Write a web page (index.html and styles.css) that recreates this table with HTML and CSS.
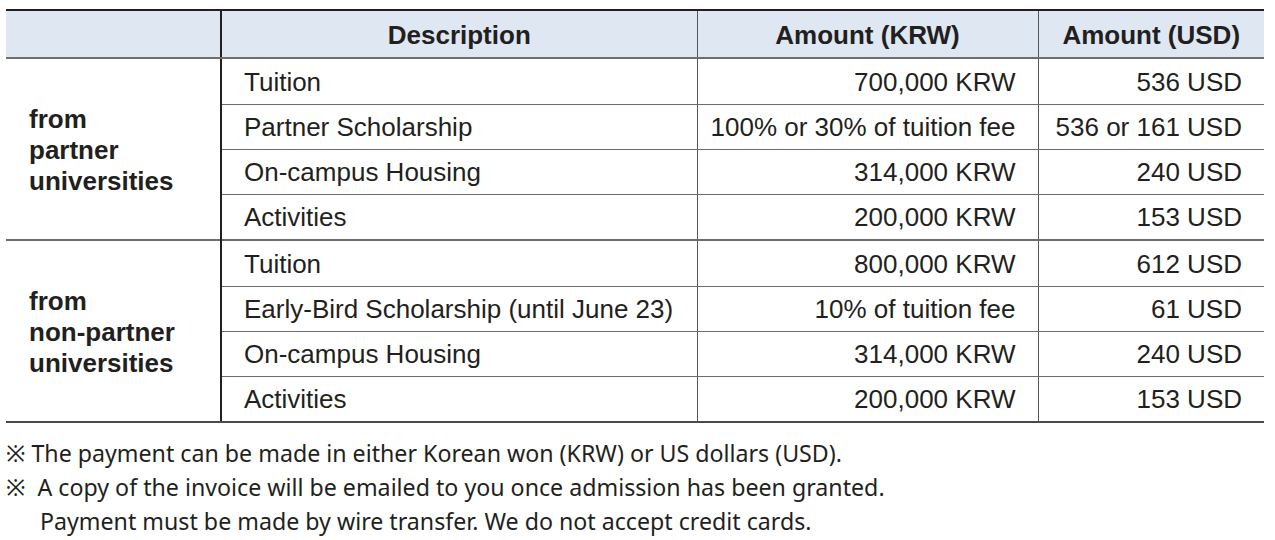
FILE: index.html
```html
<!DOCTYPE html>
<html>
<head>
<meta charset="utf-8">
<link rel="stylesheet" href="styles.css">
</head>
<body>
<div class="page">
  <table class="fees">
    <colgroup>
      <col class="c1"><col class="c2"><col class="c3"><col class="c4">
    </colgroup>
    <thead>
      <tr>
        <th class="group-h"></th>
        <th>Description</th>
        <th>Amount (KRW)</th>
        <th>Amount (USD)</th>
      </tr>
    </thead>
    <tbody class="grp">
      <tr class="first">
        <td class="label" rowspan="4">from<br>partner<br>universities</td>
        <td class="desc">Tuition</td>
        <td class="num">700,000 KRW</td>
        <td class="num">536 USD</td>
      </tr>
      <tr>
        <td class="desc">Partner Scholarship</td>
        <td class="num">100% or 30% of tuition fee</td>
        <td class="num">536 or 161 USD</td>
      </tr>
      <tr>
        <td class="desc">On-campus Housing</td>
        <td class="num">314,000 KRW</td>
        <td class="num">240 USD</td>
      </tr>
      <tr>
        <td class="desc">Activities</td>
        <td class="num">200,000 KRW</td>
        <td class="num">153 USD</td>
      </tr>
    </tbody>
    <tbody class="grp">
      <tr class="first">
        <td class="label" rowspan="4">from<br>non-partner<br>universities</td>
        <td class="desc">Tuition</td>
        <td class="num">800,000 KRW</td>
        <td class="num">612 USD</td>
      </tr>
      <tr>
        <td class="desc">Early-Bird Scholarship (until June 23)</td>
        <td class="num">10% of tuition fee</td>
        <td class="num">61 USD</td>
      </tr>
      <tr>
        <td class="desc">On-campus Housing</td>
        <td class="num">314,000 KRW</td>
        <td class="num">240 USD</td>
      </tr>
      <tr>
        <td class="desc">Activities</td>
        <td class="num">200,000 KRW</td>
        <td class="num">153 USD</td>
      </tr>
    </tbody>
  </table>
  <div class="notes">
    <p>※ The payment can be made in either Korean won (KRW) or US dollars (USD).</p>
    <p>※&nbsp; A copy of the invoice will be emailed to you once admission has been granted.</p>
    <p class="indent">Payment must be made by wire transfer. We do not accept credit cards.</p>
  </div>
</div>
</body>
</html>
```

FILE: styles.css
```css
html, body {
  margin: 0;
  padding: 0;
  background: #ffffff;
}

.page {
  padding: 9px 0 0 6px;
  color: #231f20;
}

.fees {
  border-collapse: collapse;
  table-layout: fixed;
  width: 1258px;
  font-family: "Liberation Sans", Arial, sans-serif;
  font-size: 26px;
  border-top: 2px solid #231f20;
  border-bottom: 2px solid #4a4a4a;
}

.c1 { width: 215px; }
.c2 { width: 476px; }
.c3 { width: 341px; }
.c4 { width: 226px; }

.fees th {
  background: #dfe7f3;
  font-weight: bold;
  height: 44px;
  padding: 2px 0 0;
  text-align: center;
  border-bottom: 2px solid #6e6e6e;
  border-left: 1px solid #555;
}

.fees th.group-h {
  border-left: none;
  border-right: 2px solid #231f20;
}

.fees td {
  height: 44px;
  padding: 0;
  border-bottom: 1px solid #6e6e6e;
  border-left: 1px solid #555;
  line-height: 30px;
}

.fees tr.first td {
  height: 45px;
}

.fees td.label {
  font-weight: bold;
  padding-left: 23px;
  padding-top: 2px;
  border-left: none;
  border-right: 2px solid #231f20;
  line-height: 31px;
  vertical-align: middle;
}

.fees tbody.grp + tbody.grp tr:first-child td {
  border-top: 2px solid #6e6e6e;
}

.fees tbody.grp:last-child tr:last-child td,
.fees tbody.grp:last-child td.label {
  border-bottom: 2px solid #4a4a4a;
}

.fees td.desc {
  padding-left: 22px;
}

.fees td.num {
  text-align: right;
  padding-right: 22px;
}

.notes {
  margin-top: 13px;
  font-family: "Noto Sans", "Noto Sans CJK KR", sans-serif;
  font-size: 23.2px;
  line-height: 34px;
  color: #231f20;
}

.notes p {
  margin: 0;
  white-space: nowrap;
}

.notes p.indent {
  padding-left: 34px;
}
```
